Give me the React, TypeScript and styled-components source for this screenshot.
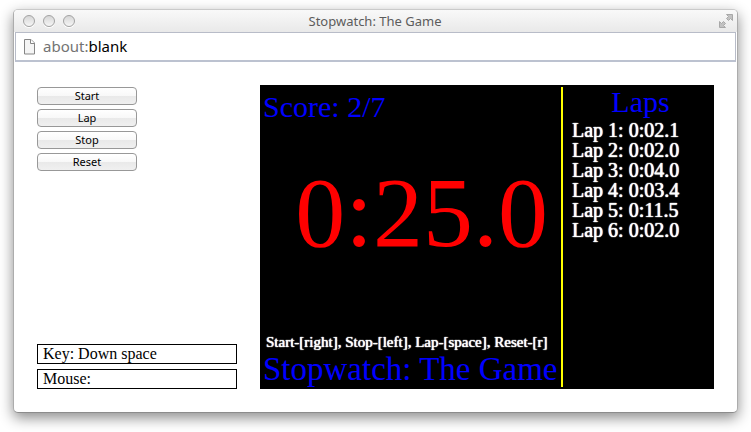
import React from "react";
import styled, { createGlobalStyle } from "styled-components";

const GlobalStyle = createGlobalStyle`
  * { box-sizing: border-box; }
  body { margin: 0; background: #fff; overflow-x: hidden; }
`;

const serif = `"Liberation Serif", "Times New Roman", serif`;
const sans = `"Lucida Grande", "Noto Sans", sans-serif`;

const Page = styled.div`
  padding: 9px 13px 19px;
`;

const Window = styled.section`
  border: 1px solid #acacac;
  border-top-color: #cacaca;
  border-bottom-color: #8c8c8c;
  border-radius: 5px;
  background: #fff;
  box-shadow: 0 5px 14px rgba(0, 0, 0, 0.45);
`;

const TitleBar = styled.header`
  display: grid;
  grid-template-columns: 1fr auto 1fr;
  align-items: center;
  height: 22px;
  padding: 0 4px 0 9px;
  border-radius: 4px 4px 0 0;
  background: linear-gradient(#f9f9f9, #e9e9e9);
`;

const Lights = styled.div`
  display: flex;
  gap: 8px;
`;

const Light = styled.button`
  width: 12px;
  height: 12px;
  padding: 0;
  border: 1px solid #a2a2a2;
  border-radius: 50%;
  background: linear-gradient(#d6d6d6, #f6f6f6);
  box-shadow: 0 1px 0 #fff;
`;

const Title = styled.h1`
  margin: 0;
  padding-right: 6px;
  font: 13px/20px ${sans};
  color: #5c5c5c;
`;

const Expand = styled.button`
  display: flex;
  justify-self: end;
  padding: 0;
  border: 0;
  background: none;
`;

const AddressBar = styled.div`
  display: flex;
  align-items: center;
  gap: 7px;
  height: 30px;
  margin: 0 1px;
  padding: 0 7px;
  border: 1px solid #b8bcc8;
  border-bottom: 2px solid #bcc2d0;
`;

const Address = styled.div`
  padding-bottom: 2px;
  font: 15px/24px ${sans};
  color: #000;
`;

const Scheme = styled.span`
  color: #737373;
`;

const Content = styled.main`
  display: flex;
  gap: 23px;
  padding: 23px;
`;

const Controls = styled.aside`
  display: flex;
  flex-direction: column;
  justify-content: space-between;
  flex: 0 0 200px;
`;

const ButtonStack = styled.div`
  display: flex;
  flex-direction: column;
  align-items: flex-start;
  gap: 4px;
  padding-top: 2px;
`;

const ControlButton = styled.button`
  width: 100px;
  height: 18px;
  padding: 0;
  border: 1px solid #989898;
  border-radius: 4px;
  background: linear-gradient(#fff 0%, #f8f8f8 50%, #e9e9e9 51%, #f0f0f0 100%);
  font: 11px/16px ${sans};
  color: #000;
`;

const Readouts = styled.div`
  display: flex;
  flex-direction: column;
  gap: 5px;
`;

const Readout = styled.output`
  display: block;
  padding: 0 5px;
  border: 1px solid #000;
  font: 16px/18px ${serif};
  color: #000;
`;

const Board = styled.div`
  display: grid;
  grid-template-columns: 1fr 153px;
  flex: 1;
  min-width: 0;
  min-height: 304px;
  padding: 2px 0;
  background: #000;
  font-family: ${serif};
`;

const Face = styled.section`
  display: flex;
  flex-direction: column;
  min-width: 0;
  padding-left: 3px;
  white-space: nowrap;
`;

const Heading = styled.h2<{ $size: number; $line: number; $align?: string }>`
  margin: 0;
  font-size: ${(p) => p.$size}px;
  line-height: ${(p) => p.$line}px;
  font-weight: 400;
  text-align: ${(p) => p.$align ?? "left"};
  color: #00f;
`;

const Time = styled.div`
  padding: 28px 13px 0 0;
  font-size: 100px;
  line-height: 116px;
  text-align: right;
  color: #f00;
`;

const Hints = styled.p`
  margin: auto 0 0;
  padding-left: 3px;
  font-size: 15px;
  line-height: 18px;
  color: #fff;
  text-shadow: 0 0 1px #fff, 0 0 1px #fff;
`;

const LapPanel = styled.section`
  border-left: 2px solid #ff0;
`;

const LapHeading = styled(Heading)`
  padding-left: 4px;
`;

const LapList = styled.ol`
  margin: 0;
  padding: 3px 0 0 9px;
  list-style: none;
  font-size: 20px;
  line-height: 20px;
  color: #fff;
  text-shadow: 0 0 1px #fff, 0 0 1px #fff;
`;

const laps = ["0:02.1", "0:02.0", "0:04.0", "0:03.4", "0:11.5", "0:02.0"];

const PageIcon = () => (
  <svg width="13" height="16" viewBox="0 0 13 16" aria-hidden="true">
    <path d="M1.5 .5h6.500l3.500 3.500v11h-10z" fill="#f5f5f5" stroke="#858585" />
    <path d="M7.500 .5v4h4" fill="#fff" stroke="#858585" />
  </svg>
);

const ExpandIcon = () => (
  <svg width="14" height="14" viewBox="0 0 14 14" aria-hidden="true">
    <path
      d="M7.500 .5h6v6l-2-2-2 2-2-2 2-2zM.5 13.500v-6l2 2 2-2 2 2-2 2 2 2z"
      fill="#c2c2c2"
      stroke="#a8a8a8"
    />
  </svg>
);

export default function App() {
  return (
    <>
      <GlobalStyle />
      <Page>
        <Window>
          <TitleBar>
            <Lights>
              <Light aria-label="Close" />
              <Light aria-label="Minimize" />
              <Light aria-label="Zoom" />
            </Lights>
            <Title>Stopwatch: The Game</Title>
            <Expand aria-label="Full screen">
              <ExpandIcon />
            </Expand>
          </TitleBar>
          <AddressBar>
            <PageIcon />
            <Address>
              <Scheme>about:</Scheme>blank
            </Address>
          </AddressBar>
          <Content>
            <Controls>
              <ButtonStack>
                {["Start", "Lap", "Stop", "Reset"].map((label) => (
                  <ControlButton key={label}>{label}</ControlButton>
                ))}
              </ButtonStack>
              <Readouts>
                <Readout>Key: Down space</Readout>
                <Readout>Mouse:</Readout>
              </Readouts>
            </Controls>
            <Board>
              <Face>
                <Heading $size={30} $line={40}>Score: 2/7</Heading>
                <Time>0:25.0</Time>
                <Hints>Start-[right], Stop-[left], Lap-[space], Reset-[r]</Hints>
                <Heading $size={33} $line={36}>Stopwatch: The Game</Heading>
              </Face>
              <LapPanel>
                <LapHeading $size={30} $line={30} $align="center">Laps</LapHeading>
                <LapList>
                  {laps.map((time, i) => (
                    <li key={i}>{`Lap ${i + 1}: ${time}`}</li>
                  ))}
                </LapList>
              </LapPanel>
            </Board>
          </Content>
        </Window>
      </Page>
    </>
  );
}
